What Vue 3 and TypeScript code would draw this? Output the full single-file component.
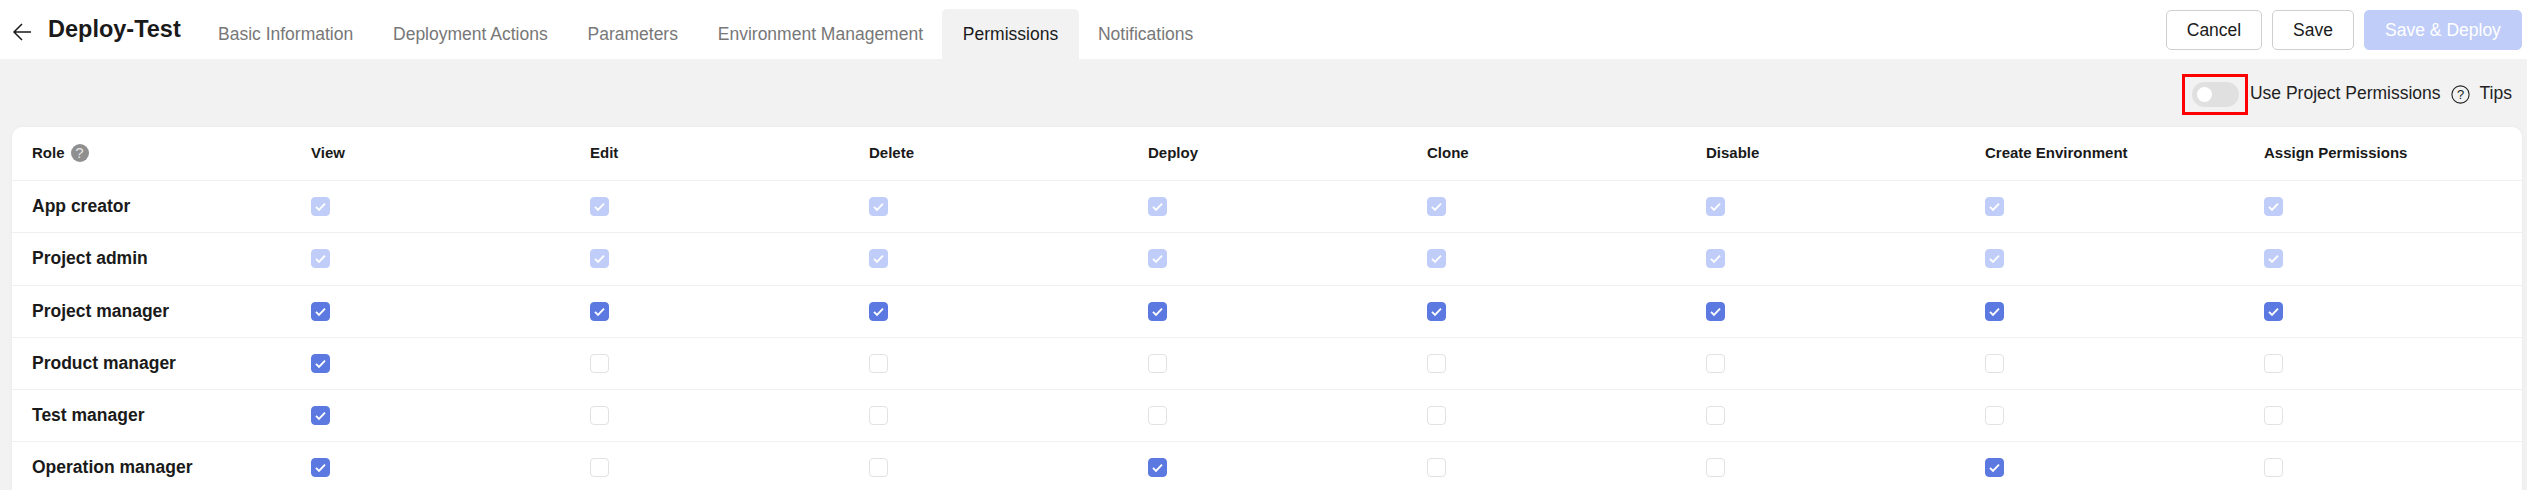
<script setup lang="ts">
const columns: string[] = ['View', 'Edit', 'Delete', 'Deploy', 'Clone', 'Disable', 'Create Environment', 'Assign Permissions']
const tabs: string[] = ['Basic Information', 'Deployment Actions', 'Parameters', 'Environment Management', 'Permissions', 'Notifications']

interface Role {
  name: string
  checked: number[]
  disabled?: boolean
}

const all = [0, 1, 2, 3, 4, 5, 6, 7]
const roles: Role[] = [
  { name: 'App creator', checked: all, disabled: true },
  { name: 'Project admin', checked: all, disabled: true },
  { name: 'Project manager', checked: all },
  { name: 'Product manager', checked: [0] },
  { name: 'Test manager', checked: [0] },
  { name: 'Operation manager', checked: [0, 3, 6] },
]
</script>

<template>
  <div class="page">
    <header class="topbar">
      <svg class="back" width="20" height="20" viewBox="0 0 20 20" fill="none" stroke="#1a1a1a" stroke-width="1.5">
        <path d="M19 10H2M10 2l-8 8 8 8" />
      </svg>
      <h1 class="title">Deploy-Test</h1>
      <nav class="tabs">
        <span v-for="t in tabs" :key="t" class="tab" :class="{ active: t === 'Permissions' }">{{ t }}</span>
      </nav>
      <div class="actions">
        <button class="btn btn-cancel">Cancel</button>
        <button class="btn btn-save">Save</button>
        <button class="btn primary">Save &amp; Deploy</button>
      </div>
    </header>

    <div class="toolbar">
      <div class="switch-wrap">
        <span class="switch"><span class="knob"></span></span>
        <span class="redbox"></span>
      </div>
      <span class="use-label">Use Project Permissions</span>
      <svg class="tip-icon" width="19" height="19" viewBox="0 0 19 19" fill="none">
        <circle cx="9.5" cy="9.5" r="8.6" stroke="#222" stroke-width="1.1" />
        <text x="9.5" y="14" text-anchor="middle" class="tip-q">?</text>
      </svg>
      <span class="tips">Tips</span>
    </div>

    <section class="card">
      <div class="row head">
        <div class="cell role-head">
          <span>Role</span>
          <span class="help">?</span>
        </div>
        <div v-for="c in columns" :key="c" class="cell">{{ c }}</div>
      </div>
      <div v-for="r in roles" :key="r.name" class="row body">
        <div class="cell role">{{ r.name }}</div>
        <div v-for="(c, i) in columns" :key="c" class="cell">
          <span class="check" :class="{ on: r.checked.includes(i), dim: r.disabled }">
            <svg v-if="r.checked.includes(i)" width="19" height="19" viewBox="0 0 19 19" fill="none">
              <path d="M5 9.8l3 3 6-6.2" stroke="#fff" stroke-width="1.9" />
            </svg>
          </span>
        </div>
      </div>
    </section>
  </div>
</template>

<style>
html, body {
  margin: 0;
  overflow: hidden;
  background: #f2f2f2;
}
</style>

<style scoped>
.page {
  width: 2527px;
  height: 490px;
  overflow: hidden;
  background: #f2f2f2;
  font-family: "Liberation Sans", Arial, sans-serif;
  color: #1a1a1a;
}
.topbar {
  height: 59px;
  background: #fff;
  display: flex;
  align-items: flex-end;
  padding: 0 5px 0 12px;
}
.back {
  align-self: center;
  margin-top: 5px;
}
.title {
  align-self: center;
  margin: -1px 0 0 16px;
  font-size: 23.5px;
  font-weight: 700;
  line-height: 30px;
  width: 149px;
  white-space: nowrap;
}
.tabs {
  display: flex;
  height: 50px;
}
.tab {
  padding: 0 21px;
  font-size: 17.5px;
  line-height: 50px;
  color: #777;
  white-space: nowrap;
}
.tab + .tab {
  margin-left: -2.2px;
}
.tab.active {
  background: #f2f2f2;
  color: #1a1a1a;
  border-radius: 5px 5px 0 0;
}
.actions {
  margin-left: auto;
  align-self: flex-start;
  margin-top: 10px;
  display: flex;
  gap: 10px;
}
.btn {
  height: 40px;
  box-sizing: border-box;
  border: 1px solid #cfcfcf;
  border-radius: 5px;
  background: #fff;
  font-family: inherit;
  font-size: 17.5px;
  color: #1a1a1a;
  padding: 0;
}
.btn-cancel { width: 96px; }
.btn-save { width: 82px; }
.btn.primary {
  width: 158px;
  background: #bfcdf8;
  border-color: #bfcdf8;
  color: #fff;
}
.toolbar {
  height: 68px;
  display: flex;
  align-items: center;
  justify-content: flex-end;
  padding: 0 15px 0 0;
  box-sizing: border-box;
  font-size: 17.5px;
}
.switch-wrap {
  position: relative;
  margin-right: 11px;
  margin-top: 3px;
}
.switch {
  display: block;
  width: 47px;
  height: 25px;
  border-radius: 13px;
  background: #e0e0e0;
  position: relative;
}
.knob {
  position: absolute;
  left: 5px;
  top: 5px;
  width: 15px;
  height: 15px;
  border-radius: 50%;
  background: #fff;
}
.redbox {
  position: absolute;
  left: -10px;
  top: -8px;
  width: 66px;
  height: 41px;
  box-sizing: border-box;
  border: 3px solid #ff0000;
}
.use-label,
.tips {
  white-space: nowrap;
  color: #222;
  margin-top: 1px;
}
.tip-icon {
  margin: 3px 10px 0 10px;
}
.tip-q {
  font-size: 13px;
  fill: #222;
  font-family: "Liberation Sans", Arial, sans-serif;
}
.card {
  margin: 0 5px 0 12px;
  background: #fff;
  border-radius: 10px 10px 0 0;
  box-shadow: 0 0 4px rgba(0, 0, 0, 0.04);
}
.row {
  display: grid;
  grid-template-columns: repeat(8, 279px) 1fr;
  padding-left: 20px;
  align-items: center;
  border-bottom: 1px solid #f0f0f0;
  box-sizing: border-box;
}
.row.head {
  height: 54px;
  padding-bottom: 2px;
  font-size: 15px;
  font-weight: 700;
}
.row.body {
  height: 52.25px;
}
.cell {
  white-space: nowrap;
  display: flex;
  align-items: center;
}
.role-head {
  gap: 6px;
}
.help {
  width: 18px;
  height: 18px;
  border-radius: 50%;
  background: #8f8f8f;
  color: #e6e6e6;
  font-size: 15px;
  font-weight: 400;
  display: flex;
  align-items: center;
  justify-content: center;
}
.role {
  font-size: 17.5px;
  font-weight: 700;
}
.check {
  width: 19px;
  height: 19px;
  box-sizing: border-box;
  border: 1px solid #e2e2e2;
  border-radius: 4px;
  background: #fff;
  position: relative;
  display: block;
}
.check svg {
  position: absolute;
  left: -1px;
  top: -1px;
}
.check.on {
  background: #5b79e0;
  border-color: #5b79e0;
}
.check.on.dim {
  background: #bfcdf8;
  border-color: #bfcdf8;
}
</style>
